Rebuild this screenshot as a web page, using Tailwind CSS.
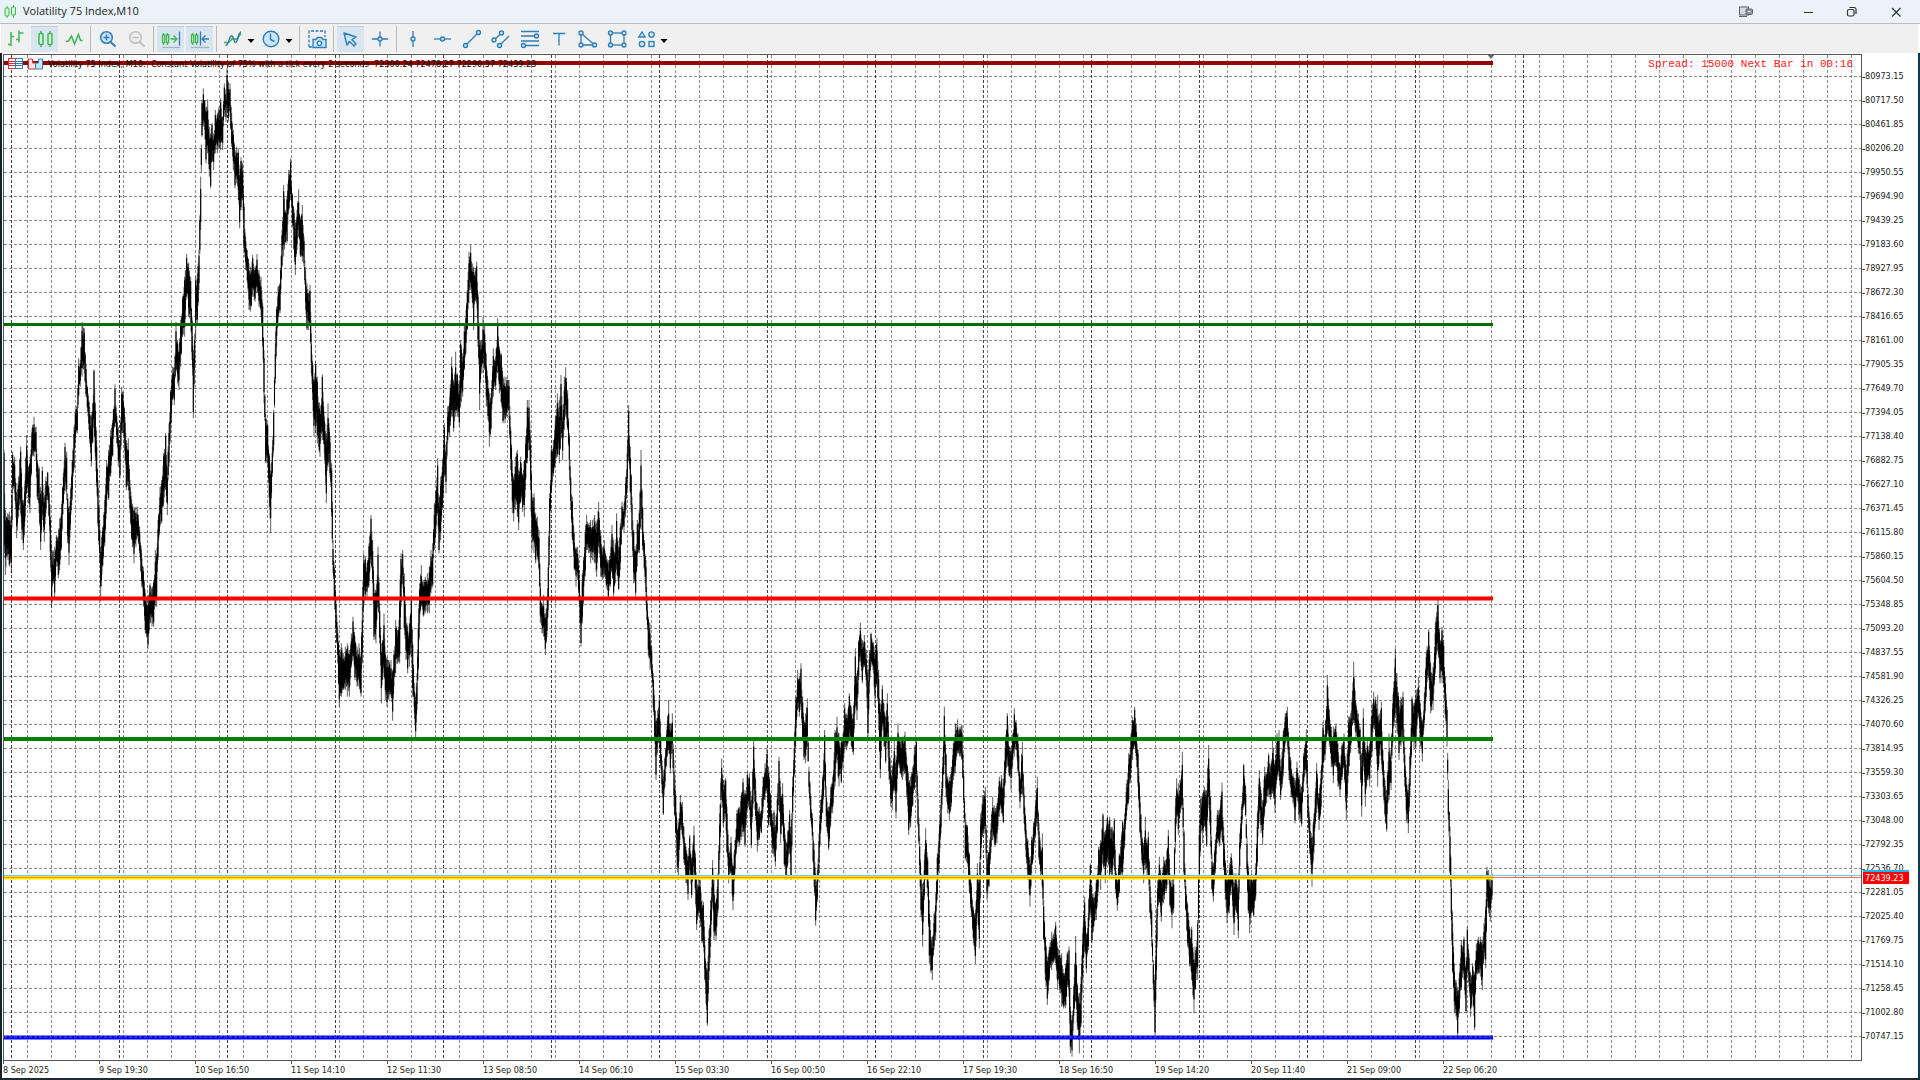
<!DOCTYPE html>
<html lang="en">

<head>
    <meta charset="UTF-8">
    <meta name="viewport" content="width=device-width, initial-scale=1.0">
    <title>Volatility 75 Index,M10</title>
    <script src="https://cdn.jsdelivr.net/npm/@tailwindcss/browser@4"></script>
</head>

<body class="h-screen flex flex-col overflow-hidden bg-white font-['DejaVu_Sans_Condensed','DejaVu_Sans',sans-serif] text-[#222]">
    <!-- title bar -->
    <header class="flex items-center h-6 shrink-0 bg-[#eaf3f8] border-b border-[#b8bcbf]">
        <svg class="w-4 h-4 ml-[3px]" viewBox="0 0 16 16" fill="#d9f5df" stroke="#3cb94e">
            <path d="M4 2v12M10.500 1v13" />
            <rect x="2" y="4" width="4" height="8" rx="1" />
            <rect x="8.500" y="3" width="4" height="8" rx="1" />
        </svg>
        <h1 class="ml-1 text-[11px] font-['Open_Sans',sans-serif]">Volatility 75 Index,M10</h1>
        <div class="ml-auto flex items-center mr-4">
            <button aria-label="Docking" class="mr-[46px]">
                <svg class="w-4 h-4" viewBox="0 0 16 16" fill="none" stroke="#5c6370">
                    <rect x="1.500" y="3" width="9" height="8" fill="#d5dbe3" />
                    <path d="M1 12.500h8" />
                    <rect x="8" y="5" width="6.500" height="5.500" rx="1" fill="#8f97a3" />
                    <path d="M10 7.500h2.500" stroke="#fff" />
                </svg>
            </button>
            <button aria-label="Minimize" class="mr-7">
                <svg class="w-4 h-4" viewBox="0 0 16 16" stroke="#333"><path d="M4 8.500h9" /></svg>
            </button>
            <button aria-label="Restore" class="mr-7">
                <svg class="w-4 h-4" viewBox="0 0 16 16" fill="none" stroke="#333" stroke-width="1.200">
                    <rect x="3.500" y="5.500" width="6.500" height="6.500" rx="1.500" />
                    <path d="M5.500 3.500h4.500a2 2 0 0 1 2 2v4.500" />
                </svg>
            </button>
            <button aria-label="Close">
                <svg class="w-4 h-4" viewBox="0 0 16 16" stroke="#333" stroke-width="1.200"><path d="M4 4l8.500 8.500M12.500 4L4 12.500" /></svg>
            </button>
        </div>
    </header>

    <!-- toolbar -->
    <nav class="flex items-center h-[29px] shrink-0 bg-[#f0f0f0] ml-px mr-[2px]">
        <div class="flex gap-[2px] pl-px pr-[3px]">
            <button aria-label="Bar chart" class="w-[27px] h-[26px] flex items-center justify-center">
                <svg class="w-6 h-6" viewBox="0 0 24 24" fill="none" stroke="#3fb551" stroke-width="1.500">
                    <path d="M7 5v14M4 17.500h3M7 9.500h3M15 3.500v12M12 12.500h3M15 6h4.500" />
                </svg>
            </button>
            <button aria-label="Candlesticks" class="w-[27px] h-[26px] flex items-center justify-center bg-[#d8e5f1] border-t border-[#c3ced9]">
                <svg class="w-6 h-6" viewBox="0 0 24 24" fill="#d2f5d9" stroke="#3fb551" stroke-width="1.500">
                    <path d="M8 4v16M17 4v16" />
                    <rect x="6" y="6.500" width="4" height="11" rx="1" />
                    <rect x="15" y="6.500" width="4" height="11" rx="1" />
                </svg>
            </button>
            <button aria-label="Line chart" class="w-[27px] h-[26px] flex items-center justify-center">
                <svg class="w-6 h-6" viewBox="0 0 24 24" fill="none" stroke="#3fb551" stroke-width="1.500">
                    <path d="M4 14.500l2.500-.5 3-5 3 8 4-9.500 2 6h2" />
                </svg>
            </button>
        </div>
        <div class="w-px h-[26px] bg-[#b9b9b9]"></div>
        <div class="flex gap-[2px] px-[3px]">
            <button aria-label="Zoom in" class="w-[27px] h-[26px] flex items-center justify-center">
                <svg class="w-6 h-6" viewBox="0 0 24 24" fill="#c9e6fb" stroke="#2e7cb8" stroke-width="1.500">
                    <path d="M14.500 15l5 4.500" stroke-width="2" />
                    <circle cx="10.500" cy="10.500" r="5.800" />
                    <path d="M7.500 10.500h6M10.500 7.500v6" />
                </svg>
            </button>
            <button aria-label="Zoom out" class="w-[27px] h-[26px] flex items-center justify-center">
                <svg class="w-6 h-6" viewBox="0 0 24 24" fill="#ececec" stroke="#c1c1c1" stroke-width="1.500">
                    <path d="M14.500 15l5 4.500" stroke-width="2" />
                    <circle cx="10.500" cy="10.500" r="5.800" />
                    <path d="M7.500 10.500h6" />
                </svg>
            </button>
        </div>
        <div class="w-px h-[26px] bg-[#b9b9b9]"></div>
        <div class="flex gap-[2px] px-[3px]">
            <button aria-label="Auto scroll" class="w-[27px] h-[26px] flex items-center justify-center bg-[#d8e5f1] border-t border-[#c3ced9]">
                <svg class="w-6 h-6" viewBox="0 0 24 24" fill="none" stroke="#3fb551" stroke-width="1.300">
                    <path d="M4.500 6v12M8.500 6v12" />
                    <rect x="3.500" y="8" width="2.200" height="7.500" fill="#d2f5d9" />
                    <rect x="7.500" y="8" width="2.200" height="7.500" fill="#d2f5d9" />
                    <path d="M11.500 12h6M14.500 8.500l3.500 3.500-3.500 3.500" />
                    <path d="M20.500 4.500v14" stroke="#2e7cb8" />
                    <path d="M3 20.500h18" stroke="#a9b3bd" />
                </svg>
            </button>
            <button aria-label="Chart shift" class="w-[27px] h-[26px] flex items-center justify-center bg-[#d8e5f1] border-t border-[#c3ced9]">
                <svg class="w-6 h-6" viewBox="0 0 24 24" fill="none" stroke="#3fb551" stroke-width="1.300">
                    <path d="M4.500 6v12M8.500 6v12" />
                    <rect x="3.500" y="8" width="2.200" height="7.500" fill="#d2f5d9" />
                    <rect x="7.500" y="8" width="2.200" height="7.500" fill="#d2f5d9" />
                    <path d="M12.500 4.500v14M21 12h-6M17.500 8.500l-3.500 3.500 3.500 3.500" stroke="#2e7cb8" />
                    <path d="M3 20.500h18" stroke="#a9b3bd" />
                </svg>
            </button>
        </div>
        <div class="w-px h-[26px] bg-[#b9b9b9]"></div>
        <div class="flex pl-[2px] pr-[3px]">
            <button aria-label="Indicators" class="w-[27px] h-[26px] flex items-center justify-center">
                <svg class="w-6 h-6" viewBox="0 0 24 24" fill="none" stroke="#2e7cb8" stroke-width="1.400">
                    <path d="M3 15.500h4.500l4-4 4 1 4.500-6" stroke="#3fb551" stroke-width="1.600" />
                    <path d="M4.500 18.500c4 0 3-9.500 6-9.500s1.500 6.500 4 6.500 2.500-10 5.500-10.500" />
                </svg>
            </button>
            <button aria-label="Indicator list" class="w-[10px] h-[26px] flex items-center justify-center mr-px">
                <svg class="w-2 h-2 mt-1" viewBox="0 0 8 8"><path d="M.5 2h7L4 6z" /></svg>
            </button>
            <button aria-label="Timeframes" class="w-[27px] h-[26px] flex items-center justify-center">
                <svg class="w-6 h-6" viewBox="0 0 24 24" fill="#c9e6fb" stroke="#2e7cb8" stroke-width="1.400">
                    <circle cx="12" cy="12" r="7.800" />
                    <path d="M11.500 6.500v6l4 2" fill="none" />
                </svg>
            </button>
            <button aria-label="Timeframe list" class="w-[10px] h-[26px] flex items-center justify-center mr-[2px]">
                <svg class="w-2 h-2 mt-1" viewBox="0 0 8 8"><path d="M.5 2h7L4 6z" /></svg>
            </button>
        </div>
        <div class="w-px h-[26px] bg-[#b9b9b9]"></div>
        <div class="flex px-[3px]">
            <button aria-label="Screenshot" class="w-[27px] h-[26px] flex items-center justify-center">
                <svg class="w-6 h-6" viewBox="0 0 24 24" fill="none" stroke="#2e7cb8" stroke-width="1.300">
                    <path d="M4 20V4h16v6M4 20h4" stroke-dasharray="3 1.500" />
                    <path d="M8 12.500h3l1.500-2h4l1.500 2h3v8H8z" fill="#c9e6fb" />
                    <circle cx="14.500" cy="16.300" r="2.200" fill="#fff" />
                </svg>
            </button>
        </div>
        <div class="w-px h-[26px] bg-[#b9b9b9]"></div>
        <div class="flex gap-[2px] px-[3px]">
            <button aria-label="Cursor" class="w-[27px] h-[26px] flex items-center justify-center bg-[#d8e5f1] border-t border-[#c3ced9]">
                <svg class="w-6 h-6" viewBox="0 0 24 24" fill="#c9e6fb" stroke="#2e7cb8" stroke-width="1.400" stroke-linejoin="round">
                    <path d="M5 6l12 4-4 2.500 4 4.500-2 2-4.500-4.500L8 18z" />
                </svg>
            </button>
            <button aria-label="Crosshair" class="w-[27px] h-[26px] flex items-center justify-center">
                <svg class="w-6 h-6" viewBox="0 0 24 24" fill="#c9e6fb" stroke="#2e7cb8" stroke-width="1.300">
                    <path d="M4 12h16M12 4.500v15" />
                    <circle cx="12" cy="12" r="2" />
                </svg>
            </button>
        </div>
        <div class="w-px h-[26px] bg-[#b9b9b9]"></div>
        <div class="flex gap-[2px] px-[3px]">
            <button aria-label="Vertical line" class="w-[27px] h-[26px] flex items-center justify-center">
                <svg class="w-6 h-6" viewBox="0 0 24 24" fill="#c9e6fb" stroke="#2e7cb8" stroke-width="1.300">
                    <path d="M11 4v16" />
                    <circle cx="11" cy="12" r="2" />
                </svg>
            </button>
            <button aria-label="Horizontal line" class="w-[27px] h-[26px] flex items-center justify-center">
                <svg class="w-6 h-6" viewBox="0 0 24 24" fill="#c9e6fb" stroke="#2e7cb8" stroke-width="1.300">
                    <path d="M3 12h17" />
                    <circle cx="11.500" cy="12" r="2" />
                </svg>
            </button>
            <button aria-label="Trendline" class="w-[27px] h-[26px] flex items-center justify-center">
                <svg class="w-6 h-6" viewBox="0 0 24 24" fill="#c9e6fb" stroke="#2e7cb8" stroke-width="1.300">
                    <path d="M5.500 18.500l13-13" />
                    <circle cx="5.500" cy="18.500" r="2" />
                    <circle cx="18.500" cy="5.500" r="2" />
                </svg>
            </button>
            <button aria-label="Equidistant channel" class="w-[27px] h-[26px] flex items-center justify-center">
                <svg class="w-6 h-6" viewBox="0 0 24 24" fill="#c9e6fb" stroke="#2e7cb8" stroke-width="1.300">
                    <path d="M5 13l8-7.500M10.500 18.500l9.500-9.500" />
                    <circle cx="5" cy="13" r="2" />
                    <circle cx="12.500" cy="6" r="2" />
                    <circle cx="10.500" cy="18.500" r="2" />
                </svg>
            </button>
            <button aria-label="Fibonacci" class="w-[27px] h-[26px] flex items-center justify-center">
                <svg class="w-6 h-6" viewBox="0 0 24 24" fill="#c9e6fb" stroke="#2e7cb8" stroke-width="1.300">
                    <path d="M3 4.500h18M3 9h18M3 14h18M3 18.500h18" />
                    <circle cx="18.500" cy="9" r="2" />
                    <circle cx="5.500" cy="18.500" r="2" />
                </svg>
            </button>
            <button aria-label="Text" class="w-[27px] h-[26px] flex items-center justify-center">
                <svg class="w-6 h-6" viewBox="0 0 24 24" fill="none" stroke="#2e7cb8" stroke-width="1.300">
                    <path d="M6 6.500h12M12 6.500v12" />
                </svg>
            </button>
            <button aria-label="Triangle" class="w-[27px] h-[26px] flex items-center justify-center">
                <svg class="w-6 h-6" viewBox="0 0 24 24" fill="#c9e6fb" stroke="#2e7cb8" stroke-width="1.300">
                    <path d="M5 6v12h13.500z" fill="none" />
                    <circle cx="5" cy="6" r="2" />
                    <circle cx="5" cy="18" r="2" />
                    <circle cx="18.500" cy="18" r="2" />
                </svg>
            </button>
            <button aria-label="Rectangle" class="w-[27px] h-[26px] flex items-center justify-center">
                <svg class="w-6 h-6" viewBox="0 0 24 24" fill="#c9e6fb" stroke="#2e7cb8" stroke-width="1.300">
                    <rect x="5.500" y="6" width="13.500" height="12" fill="none" />
                    <circle cx="5.500" cy="6" r="2" />
                    <circle cx="19" cy="6" r="2" />
                    <circle cx="5.500" cy="18" r="2" />
                    <circle cx="19" cy="18" r="2" />
                </svg>
            </button>
            <div class="flex">
                <button aria-label="Objects" class="w-[27px] h-[26px] flex items-center justify-center">
                    <svg class="w-6 h-6" viewBox="0 0 24 24" fill="#c9e6fb" stroke="#2e7cb8" stroke-width="1.300">
                        <path d="M8 5l3.200 5H4.800z" />
                        <circle cx="17.500" cy="7.500" r="2.700" />
                        <circle cx="8" cy="17" r="2.700" />
                        <rect x="15" y="14.500" width="5" height="5" />
                    </svg>
                </button>
                <button aria-label="Object list" class="w-[10px] h-[26px] flex items-center justify-center">
                    <svg class="w-2 h-2 mt-1" viewBox="0 0 8 8"><path d="M.5 2h7L4 6z" /></svg>
                </button>
            </div>
        </div>
    </nav>

    <!-- chart -->
    <main class="flex-1 min-h-0 flex flex-col pt-px border-l-2 border-l-[#14222c] border-r-2 border-r-[#0d3a4d] border-b-2 border-b-[#20292e]">
        <div class="flex-1 min-h-0 flex">
            <div id="plot" class="relative flex-1 min-w-0 ml-px border border-[#555] overflow-hidden">
                <svg id="chart" class="w-full h-full"></svg>
                <div class="absolute top-[3px] left-1 right-2 flex items-center h-3">
                    <svg class="w-9 h-3" viewBox="0 0 36 12">
                        <rect x=".5" y=".5" width="7" height="10" fill="#fff" stroke="#d8322d" />
                        <rect x="7.500" y=".5" width="7" height="10" fill="#fff" stroke="#2e7cb8" />
                        <path d="M1 3.500h6M1 5.500h6M1 7.500h6" stroke="#d8322d" />
                        <path d="M8 3.500h6M8 5.500h6M8 7.500h6" stroke="#2e7cb8" />
                        <path d="M20.500 1h4v4h3v6h-7z" fill="#fde4e2" stroke="#d8322d" />
                        <path d="M27.500 11V5h3V1h4v10z" fill="#c9e6fb" stroke="#2e7cb8" />
                    </svg>
                    <p class="ml-1 text-[9px] leading-3 whitespace-pre text-black">Volatility 75 Index, M10:  Constant Volatility of 75% with a tick every 2 seconds  72300.24 72478.27 72290.57 72439.23</p>
                    <p class="ml-auto text-[11px] leading-3 text-[#ff2020] font-['Liberation_Mono',monospace]">Spread: 15000 Next Bar in 00:16</p>
                </div>
            </div>
            <aside class="relative w-14 shrink-0 pt-[11px] overflow-hidden text-[9px]">
                <ol id="prices"></ol>
                <div class="absolute left-px top-[816px] bg-[#ff0000] border-t-2 border-[#1fb6f5] text-white leading-[12px] h-[14px] px-[2px] w-[46px]">72439.23</div>
            </aside>
        </div>
        <ol id="dates" class="flex h-[17px] shrink-0 ml-px text-[9px] overflow-hidden"></ol>
    </main>

    <script>
        // bar envelope: x, high, low triples in thirds of a pixel, relative to each block's origin
        const blocks = [
            { x: 0, y: 900, p: [12,450,740, 16,630,825, 22,640,770, 28,635,800, 34,650,820, 38,455,580, 44,470,580, 50,580,715, 56,530,650, 62,440,640, 66,560,720, 70,600,750, 76,520,650, 80,405,580, 86,500,610, 90,470,640, 96,385,470, 102,350,470, 108,380,480, 112,480,600, 117,500,640, 122,560,750, 127,500,660, 133,590,725, 138,530,640, 143,515,600, 147,560,650, 151,650,780, 155,770,925, 159,750,850, 164,740,900, 169,705,800, 175,710,835, 179,655,810, 184,640,750, 188,560,645, 195,428,560, 200,455,600, 203,580,730, 207,640,795, 211,590,690, 217,480,600, 222,380,510, 226,325,430, 232,310,400, 236,175,290, 241,180,260, 246,65,230, 253,85,220, 258,190,290, 264,280,350, 269,320,430, 274,350,500, 278,310,430, 282,208,370, 286,310,470, 290,420,560, 294,540,680, 299,660,790, 302,740,905, 308,680,800, 314,600,740, 320,480,620, 326,450,600, 332,390,530, 338,360,470, 345,253,370, 350,340,430, 355,380,500, 360,420,535, 365,260,400, 370,275,400, 375,350,480, 379,420,570, 385,415,570, 390,540,640, 395,600,720, 402,620,790, 408,620,740, 413,620,710, 419,680,760, 425,760,860, 430,800,920, 436,880,1000, 444,900,1048, 450,850,970, 456,860,980, 461,840,980, 466,750,920, 470,760,920, 474,660,780, 480,560,680, 485,540,670, 491,460,610, 497,400,570, 502,500,645, 507,370,500, 512,270,400, 518,200,300, 523,200,315, 528,66,210, 533,120,250, 537,150,270, 542,60,200] },
            { x: 510, y: 150, p: [38,740,860, 44,680,860, 50,612,740, 56,640,800, 62,680,820, 66,800,930, 70,900,1105, 74,850,960, 77,680,870, 82,670,820, 87,600,720, 92,380,540, 96,150,260, 100,115,230, 104,150,240, 108,170,340, 113,148,310, 118,230,380, 122,250,415, 126,220,320, 131,250,360, 136,180,310, 142,190,310, 147,170,290, 152,145,300, 158,200,300, 163,100,200, 168,130,215, 171,55,180, 175,95,215, 180,100,200, 185,190,290, 190,240,360, 195,300,415, 200,290,400, 205,295,450, 209,380,535, 213,322,480, 218,340,450, 222,460,600, 227,560,660, 232,600,700, 237,640,780, 242,650,785, 248,615,740, 255,650,755, 261,612,730, 267,660,770, 273,680,800, 278,760,890, 282,900,1060, 287,1090,1240, 293,1120,1250, 298,1210,1370, 302,1260,1450, 307,1190,1280, 311,1080,1200, 316,880,1000, 320,770,890, 324,710,830, 330,700,790, 336,540,650, 341,405,620, 346,480,580, 351,440,580, 356,360,490, 362,325,450, 367,430,530, 372,480,600, 376,520,675, 381,480,600, 386,418,560, 391,500,620, 397,465,635, 402,560,650, 407,660,780, 411,700,840, 416,730,840, 420,705,820, 424,850,970, 428,940,1050, 432,980,1160, 437,935,1150, 442,980,1180, 450,1080,1220, 457,973,1170, 463,1100,1210, 469,1150,1360, 474,1060,1250] },
            { x: 990, y: 690, p: [0,620,740, 5,700,860, 9,930,1030, 13,1010,1110, 18,1110,1200, 23,1190,1300, 28,1260,1430, 34,1240,1400, 40,1270,1380, 46,1250,1380, 52,1240,1400, 58,1260,1400, 64,1210,1310, 69,1160,1290, 75,1220,1350, 81,1250,1370, 87,1240,1370, 93,1270,1400, 97,1130,1300, 101,970,1130, 106,980,1100, 111,1000,1110, 117,940,1070, 123,855,990, 128,930,1060, 132,1060,1230, 138,1080,1240, 144,950,1130, 149,1120,1240, 154,1240,1420, 158,1230,1350, 162,1150,1340, 166,1270,1410, 171,1280,1430, 177,1290,1410, 183,1290,1400, 188,1320,1472, 192,1260,1370, 197,1170,1330, 203,1200,1300, 209,1100,1300, 213,970,1130, 218,960,1060, 223,1030,1200, 228,1160,1290, 233,1190,1330, 238,1180,1310, 244,1105,1240, 248,1240,1400, 253,1360,1450, 257,1400,1522, 261,1330,1440, 265,1180,1320, 269,1060,1180, 274,1005,1130, 280,1050,1160, 286,1040,1150, 292,1030,1150, 298,1010,1150, 303,960,1090, 308,940,1070, 313,820,960, 318,780,910, 323,685,850, 327,830,970, 332,740,930, 337,710,840, 343,580,740, 348,660,790, 353,530,640, 359,500,620, 365,380,560, 371,460,605, 377,365,560, 382,430,560, 388,480,590, 392,330,530, 398,370,500, 403,280,420, 408,240,370, 412,180,300, 417,65,220, 422,45,180, 427,100,220, 431,110,300, 436,115,215, 440,95,220, 444,190,350, 449,330,540, 454,330,430, 459,262,430, 464,280,420, 469,370,530, 474,450,570, 478,490,650, 483,490,600, 490,355,500, 497,380,480, 503,265,430, 508,350,490, 514,370,520, 519,440,580, 525,440,580, 531,440,560, 537,450,570, 542,590,720, 547,690,850, 551,740,875, 556,680,840, 562,660,860, 566,720,900, 572,680,820, 578,730,845, 583,690,860, 587,620,750, 592,510,700, 597,510,660, 602,620,780, 606,790,960, 612,790,970, 617,850,1000, 622,860,980, 627,900,1020, 631,1060,1180, 636,1120,1210, 641,1095,1220, 646,1150,1275, 651,1110,1220, 655,1000,1140, 659,790,950, 664,650,790, 670,630,740, 676,560,700, 682,490,680, 688,510,700, 693,435,620, 698,560,690, 703,440,600, 707,412,560, 713,480,600, 718,610,720, 722,740,840, 727,800,930, 733,910,1020, 738,950,1070, 743,950,1050, 748,1020,1130, 753,1110,1250, 757,1030,1180, 761,980,1100, 766,900,1040, 770,855,960, 776,880,970, 782,870,1000, 788,870,990, 794,855,1000, 800,880,1040, 806,815,950, 812,900,1040, 817,950,1050, 823,930,1040, 829,980,1070, 835,990,1110, 841,970,1070, 846,885,1030, 851,930,1100, 856,940,1060, 860,850,1020, 866,960,1080, 871,880,1020, 876,815,900, 882,820,910, 887,740,860, 892,650,780, 896,525,680, 901,650,790, 906,800,920, 911,900,1060, 917,960,1100, 922,870,1010, 928,840,970, 933,660,850, 938,830,960, 943,930,1020, 948,990,1120] },
            { x: 1920, y: 1740, p: [20,20,120, 25,110,230, 30,130,270, 35,200,290, 40,280,390, 44,360,480, 48,420,600, 53,390,520, 58,345,480, 62,460,560, 66,540,640, 70,590,705, 75,530,620, 80,450,560, 86,360,510, 91,430,580, 97,400,520, 102,540,680, 107,640,760, 111,720,860, 115,740,900, 121,645,750, 127,665,770, 132,740,850, 138,800,910, 144,830,960, 149,765,860, 155,840,955, 162,738,880, 166,820,930, 170,900,1050, 175,890,1010, 181,900,1040, 186,960,1090, 190,965,1100, 194,1070,1200, 198,1150,1270, 202,1170,1337, 207,1050,1200, 212,960,1100, 218,840,950, 222,900,1080, 228,980,1080, 234,880,1000, 239,700,840, 245,535,650, 250,600,740, 257,595,710, 261,680,820, 266,800,910, 273,770,880, 279,850,990, 285,780,880, 291,690,800, 297,680,800, 303,650,780, 309,595,770, 315,630,800, 322,575,690, 328,580,690, 334,660,805, 341,480,630, 347,600,720, 352,670,815, 358,680,780, 364,690,760, 369,590,700, 375,550,660, 381,505,640, 386,560,740, 392,640,740, 397,700,820, 402,690,830, 406,740,860, 412,640,760, 417,530,640, 422,620,790, 428,610,740, 433,730,860, 438,790,900, 444,750,850, 449,690,820, 453,740,900, 458,590,720, 463,480,590, 467,350,500, 473,270,390, 478,290,410, 483,250,380, 488,350,480, 492,430,540, 497,400,550, 502,355,500, 507,560,640, 512,640,720, 517,700,780, 522,790,920, 527,880,1037, 532,870,965, 537,760,880, 542,660,760, 548,590,700, 554,450,600, 559,620,740, 566,680,810, 572,620,740, 578,590,700, 585,450,620, 591,410,550, 597,460,620, 604,480,610, 609,460,570, 614,370,500, 620,400,510, 628,340,480, 634,380,500, 640,400,525, 646,205,380, 651,300,420, 656,180,300, 661,128,230, 667,180,310, 673,165,260, 679,210,320, 684,300,475, 688,210,340, 693,158,260, 699,185,270, 705,200,380, 711,175,310, 716,270,450, 721,370,595, 727,315,440, 732,370,500, 737,410,550, 742,340,480, 747,470,600, 752,560,680, 757,570,690, 763,480,630, 768,560,715, 774,430,560, 780,480,580, 787,470,600, 795,455,580, 800,530,650, 806,580,765, 812,590,740, 818,560,680, 823,500,630, 829,475,620, 834,640,740, 839,770,880, 843,880,1010, 848,910,1100, 853,840,960, 857,745,900, 863,830,950, 868,960,1150, 873,1070,1180, 877,1070,1200, 882,1000,1110, 887,940,1080, 892,820,960, 897,760,870, 903,650,760, 908,530,650, 913,380,520, 918,520,650, 923,590,700, 928,590,720, 934,560,680, 940,490,600, 946,430,580, 953,418,520, 960,440,530, 966,435,540, 971,570,670, 976,700,840, 982,735,850, 988,820,940, 994,910,1010, 1000,980,1090, 1006,1000,1152, 1012,850,1000, 1018,900,1105] },
            { x: 2880, y: 2040, p: [62,400,540, 68,345,470, 76,320,460, 81,510,660, 88,500,620, 93,430,520, 98,350,480, 105,385,500, 111,370,490, 118,290,410, 124,285,400, 130,310,430, 136,180,310, 142,100,260, 148,200,290, 153,200,330, 158,160,260, 163,85,230, 168,120,210, 174,160,280, 180,290,385, 187,185,340, 192,320,430, 198,430,530, 204,480,600, 210,540,680, 215,470,580, 220,440,540, 226,380,470, 232,290,430, 237,430,540, 242,500,600, 247,460,625, 251,660,780, 256,770,900, 262,830,975, 268,800,900, 275,755,870, 281,760,850, 287,725,850, 293,800,930, 299,810,930, 305,820,980, 311,880,985, 317,850,985, 322,815,920, 327,800,950, 331,980,1120, 336,1020,1130, 341,920,1030, 347,768,960, 352,910,1050, 358,940,1120, 363,890,1040, 368,760,900, 374,650,800, 379,760,880, 385,700,810, 391,550,690, 396,620,790, 402,640,740, 409,600,720, 416,500,620, 422,480,630, 429,400,550, 436,450,610, 442,410,540, 449,410,590, 456,440,590, 463,415,560, 467,560,640, 472,600,692, 478,520,640, 483,480,590, 488,420,600, 494,400,500, 499,310,420, 506,220,370, 513,160,280, 518,110,240, 524,80,200, 529,130,240, 534,210,320, 540,350,460, 545,450,540, 551,490,610, 556,410,570, 561,480,590, 565,455,600, 570,600,700, 575,690,800, 580,840,930, 585,920,1065, 589,720,900, 593,600,710, 598,530,670, 604,590,725, 611,530,670, 618,540,640, 625,450,600, 630,580,680, 636,600,745, 641,590,700, 646,380,520, 650,295,410, 655,310,465, 661,300,400, 667,215,390, 672,450,590, 677,600,690, 683,670,800, 689,740,860, 695,740,900, 702,800,1000, 708,800,900, 713,720,900, 718,440,600] },
            { x: 3600, y: 1740, p: [3,650,760, 8,640,790, 14,620,740, 20,630,800, 26,495,650, 32,650,800, 36,820,930, 40,850,965, 46,780,880, 52,690,790, 58,690,800, 66,608,780, 71,740,870, 76,840,960, 81,890,1030, 88,850,1000, 94,820,920, 102,880,1065, 108,880,990, 115,920,1075, 119,760,880, 124,680,790, 131,552,680, 137,620,710, 141,770,880, 145,860,1000, 149,890,1060, 155,880,1000, 161,890,1010, 167,850,960, 172,700,860, 178,570,700, 183,630,760, 188,660,795, 194,560,700, 200,580,670, 206,520,650, 212,560,660, 218,480,640, 225,540,700, 231,460,600, 237,450,590, 242,560,660, 250,450,590, 256,400,490, 262,380,500, 267,480,600, 273,540,650, 279,580,670, 285,600,730, 291,545,650, 297,590,720, 305,620,740, 311,520,610, 319,448,580, 324,620,710, 329,710,820, 336,770,920, 342,700,820, 350,550,680, 357,640,750, 363,570,690, 369,425,570, 375,470,540, 382,285,460, 388,390,500, 394,440,560, 400,440,610, 408,430,560, 414,490,620, 420,550,650, 426,490,600, 432,460,560, 439,570,720, 446,410,580, 452,400,520, 461,245,430, 468,370,480, 475,400,520, 480,440,540, 485,520,710, 490,385,560, 496,510,680, 502,480,600, 509,490,620, 516,370,530, 521,335,440, 527,350,470, 533,345,620, 539,400,520, 544,365,540, 550,540,650, 555,600,710, 560,630,755, 567,460,660, 573,510,630, 578,370,500, 586,205,400, 591,280,460, 597,360,540, 603,350,500, 609,335,490, 614,500,620, 619,590,720, 625,630,760, 630,520,650, 636,350,480, 642,370,510, 648,340,500, 655,290,410, 661,370,500, 667,420,545, 673,340,430, 679,220,350, 686,148,290, 692,250,400, 699,260,390, 706,125,280, 714,55,210, 720,180,310, 726,140,310, 731,180,320, 736,290,415, 741,380,500, 745,600,720, 750,740,880, 754,900,1020, 758,1030,1180, 763,1150,1300, 768,1200,1310, 773,1220,1372, 778,1180,1300, 784,1080,1230, 792,1070,1200, 798,1160,1300, 802,1040,1170, 807,1120,1220, 812,1180,1310, 818,1150,1250, 824,1180,1350, 829,1090,1200, 835,1070,1180, 841,1070,1190, 847,1080,1230, 852,1030,1130, 857,980,1165, 861,860,980, 866,870,1000, 871,890,1025, 876,880,960] }
        ];

        const points = [];
        blocks.forEach(b => {
            for (let i = 0; i < b.p.length; i += 3) {
                points.push([(b.x + b.p[i]) / 3, (b.y + b.p[i + 1]) / 3, (b.y + b.p[i + 2]) / 3]);
            }
        });

        let seed = 75;
        const rnd = () => (seed = (seed * 16807) % 2147483647) / 2147483647;

        let wicks = '', bodies = '';
        const bar = (x, hi, lo) => {
            const h = lo - hi;
            wicks += `M${x.toFixed(2)} ${hi.toFixed(1)}V${lo.toFixed(1)}`;
            bodies += `M${x.toFixed(2)} ${(hi + h * (0.03 + rnd() * 0.25)).toFixed(1)}V${(lo - h * (0.03 + rnd() * 0.25)).toFixed(1)}`;
        };
        for (let i = 0; i < points.length; i++) {
            const [x0, h0, l0] = points[i];
            bar(x0, h0, l0);
            if (!points[i + 1]) break;
            const [x1, h1, l1] = points[i + 1];
            const n = Math.max(1, Math.round((x1 - x0) / 0.75));
            for (let k = 1; k < n; k++) {
                const t = k / n, h = h0 + (h1 - h0) * t, l = l0 + (l1 - l0) * t;
                bar(x0 + (x1 - x0) * t, h + (l - h) * rnd() * 0.25, l - (l - h) * rnd() * 0.25);
            }
        }

        const W = 1861, H = 1061, END = 1493;
        let grid = '', days = '';
        for (let x = 27.5; x < W; x += 24) grid += `M${x} 55V${H}`;
        for (let y = 76.5; y < H; y += 24) grid += `M4 ${y}H${W}`;
        for (let x = 11.5; x < 1530; x += 108) days += `M${x} 55V${H}`;

        const level = (y, w, c) => `<path d="M4 ${y}H${END}" stroke="${c}" stroke-width="${w}"/>`;
        document.getElementById('chart').innerHTML = `
            <g transform="translate(-4 -55)" fill="none">
                <path d="${grid}" stroke="#8c8c8c" stroke-dasharray="3 2"/>
                <path d="${days}" stroke="#444" stroke-dasharray="3 2"/>
                <path d="${wicks}" stroke="#000" stroke-opacity=".7" stroke-width=".9"/>
                <path d="${bodies}" stroke="#000" stroke-width="1.1"/>
                ${level(63, 4, '#960000')}
                ${level(324.5, 3, '#006e00')}
                ${level(598.5, 4, '#ff0000')}
                ${level(739, 4, '#008000')}
                ${level(877.5, 4, '#ffe600')}
                ${level(1037.500, 4, '#0000ff')}
                <path d="M4 1037H${END}" stroke="#5a5ab4" stroke-dasharray="3 2"/>
                <path d="M4 875.5H${W}" stroke="#5fd0f5"/>
                <path d="M4 877.5H${END}" stroke="#ff8c00"/>
                <path d="M${END} 877.5H${W}" stroke="#ff6b6b"/>
                <path d="M1487 54h8l-4 5z" fill="#666"/>
            </g>`;

        const prices = document.getElementById('prices');
        for (let i = 0; i <= 40; i++) {
            prices.insertAdjacentHTML('beforeend',
                `<li class="h-6 flex items-center"><span class="w-[3px] h-px bg-[#555]"></span>${(80973.15 - i * 255.65).toFixed(2)}</li>`);
        }

        const dates = ['8 Sep 2025', '9 Sep 19:30', '10 Sep 16:50', '11 Sep 14:10', '12 Sep 11:30', '13 Sep 08:50', '14 Sep 06:10', '15 Sep 03:30',
            '16 Sep 00:50', '16 Sep 22:10', '17 Sep 19:30', '18 Sep 16:50', '19 Sep 14:20', '20 Sep 11:40', '21 Sep 09:00', '22 Sep 06:20'];
        dates.forEach(d => {
            document.getElementById('dates').insertAdjacentHTML('beforeend',
                `<li class="w-24 shrink-0 leading-3"><span class="block w-px h-[3px] bg-[#555]"></span>${d}</li>`);
        });
    </script>
</body>

</html>
